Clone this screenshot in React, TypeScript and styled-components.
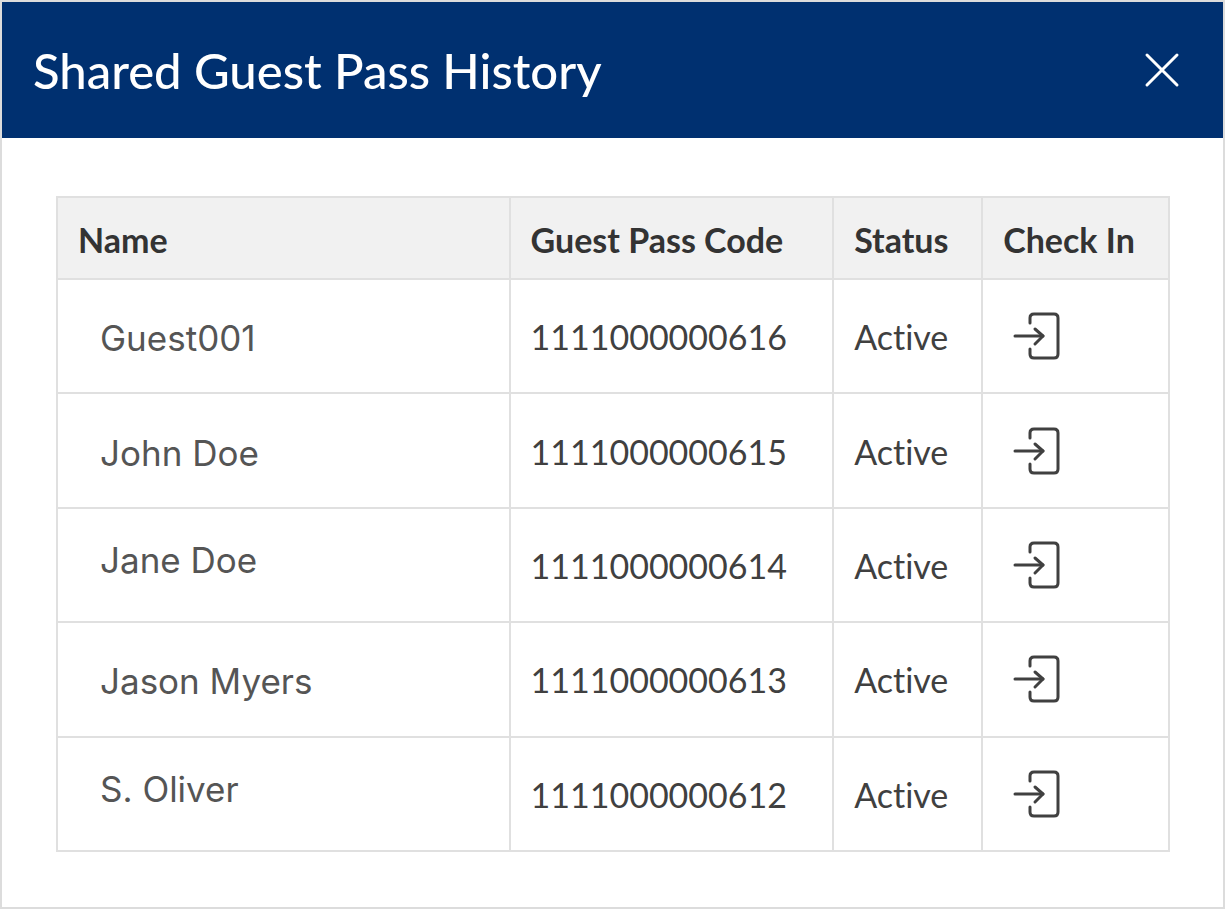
import React from "react";
import styled, { createGlobalStyle } from "styled-components";

const GlobalStyle = createGlobalStyle`
  * { box-sizing: border-box; }
  body { margin: 0; background: #fff; font-family: Lato, sans-serif; font-variant-ligatures: none; }
`;

const Dialog = styled.section`
  min-height: 100vh;
  border: 2px solid #dcdcdc;
  background: #fff;
  color: #404040;
`;

const Header = styled.header`
  display: flex;
  align-items: center;
  justify-content: space-between;
  height: 136px;
  padding: 0 40px 0 31px;
  background: #003070;
  color: #fff;
`;

const Title = styled.h1`
  margin: 0;
  font-size: 49px;
  font-weight: 500;
  line-height: 60px;
`;

const IconButton = styled.button`
  display: flex;
  padding: 0;
  border: 0;
  background: none;
  color: inherit;
  cursor: pointer;
`;

const Content = styled.div`
  padding: 58px 53px 54px 54px;
`;

const Table = styled.table`
  width: 100%;
  height: 656px;
  border-collapse: collapse;
  table-layout: fixed;
`;

const Column = styled.col<{ $share: number }>`
  width: ${({ $share }) => $share}%;
`;

const HeadCell = styled.th`
  height: 82px;
  padding: 4px 20px 0;
  border: 2px solid #e0e0e0;
  background: #f1f1f1;
  color: #333;
  font-size: 34px;
  font-weight: 700;
  line-height: 40px;
  text-align: left;
  white-space: nowrap;
`;

const Cell = styled.td`
  height: 114px;
  padding: 2px 20px 0;
  border: 2px solid #e0e0e0;
  font-size: 34px;
  line-height: 40px;
  white-space: nowrap;
`;

const NameCell = styled(Cell)<{ $raised?: boolean }>`
  padding: ${({ $raised }) => ($raised ? "0 20px 10px 42px" : "4px 20px 0 42px")};
  color: #555;
  font-family: Inter, sans-serif;
  font-size: 35px;
`;

const ActionCell = styled(Cell)`
  padding: 0 30px;
`;

const CloseIcon = () => (
  <svg width="42" height="42" viewBox="0 0 42 42" fill="none" stroke="currentColor" strokeWidth="3" strokeLinecap="round" aria-hidden="true">
    <path d="M6 6 36 36M36 6 6 36" />
  </svg>
);

const CheckInIcon = () => (
  <svg width="48" height="50" viewBox="0 0 48 50" fill="none" stroke="currentColor" strokeWidth="3" strokeLinecap="round" aria-hidden="true">
    <path d="M17 12V7q0-4 4-4h20q4 0 4 4v36q0 4-4 4H21q-4 0-4-4v-5M2 25h28" />
    <path d="m22 18 8 7-8 8" strokeLinejoin="round" />
  </svg>
);

const guests = [
  { name: "Guest001", code: "1111000000616" },
  { name: "John Doe", code: "1111000000615" },
  { name: "Jane Doe", code: "1111000000614", raised: true },
  { name: "Jason Myers", code: "1111000000613" },
  { name: "S. Oliver", code: "1111000000612", raised: true },
];

export default function App() {
  return (
    <Dialog role="dialog" aria-labelledby="history-title">
      <GlobalStyle />
      <Header>
        <Title id="history-title">Shared Guest Pass History</Title>
        <IconButton type="button" aria-label="Close"><CloseIcon /></IconButton>
      </Header>
      <Content>
        <Table>
          <colgroup>
            <Column $share={40.7} /><Column $share={29.1} /><Column $share={13.4} /><Column $share={16.8} />
          </colgroup>
          <thead>
            <tr>
              <HeadCell>Name</HeadCell>
              <HeadCell>Guest Pass Code</HeadCell>
              <HeadCell>Status</HeadCell>
              <HeadCell>Check In</HeadCell>
            </tr>
          </thead>
          <tbody>
            {guests.map(({ name, code, raised }) => (
              <tr key={code}>
                <NameCell $raised={raised}>{name}</NameCell>
                <Cell>{code}</Cell>
                <Cell>Active</Cell>
                <ActionCell>
                  <IconButton type="button" aria-label={`Check in ${name}`}><CheckInIcon /></IconButton>
                </ActionCell>
              </tr>
            ))}
          </tbody>
        </Table>
      </Content>
    </Dialog>
  );
}
